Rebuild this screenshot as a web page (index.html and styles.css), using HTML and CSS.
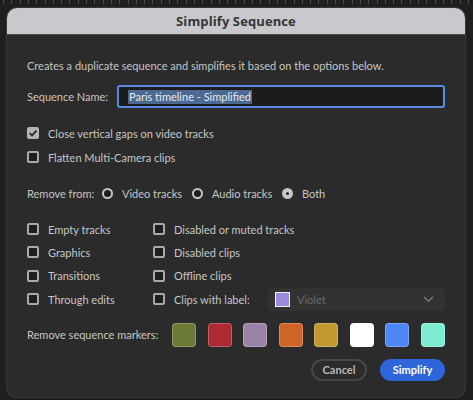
FILE: index.html
```html
<!DOCTYPE html>
<html>
<head>
<meta charset="utf-8">
<link rel="stylesheet" href="styles.css">
</head>
<body>
<div class="ruler"></div>
<div class="dialog">
  <div class="titlebar">Simplify Sequence</div>
  <div class="content">
    <div class="desc">Creates a duplicate sequence and simplifies it based on the options below.</div>
    <div class="name-row">
      <span class="label">Sequence Name:</span>
      <div class="input"><span class="sel">Paris timeline - Simplified</span></div>
    </div>
    <label class="cb cb-first"><span class="box checked"><svg viewBox="0 0 12 12" width="12" height="12"><path d="M2.6 6.2 L5 8.5 L9.4 3.6" fill="none" stroke="#2a2a2a" stroke-width="1.8"/></svg></span>Close vertical gaps on video tracks</label>
    <label class="cb cb-second"><span class="box"></span>Flatten Multi-Camera clips</label>
    <div class="radio-row">
      <span class="label">Remove from:</span>
      <span class="radio"><span class="circle"></span>Video tracks</span>
      <span class="radio"><span class="circle"></span>Audio tracks</span>
      <span class="radio"><span class="circle on"></span>Both</span>
    </div>
    <div class="grid">
      <label class="cb"><span class="box"></span>Empty tracks</label>
      <label class="cb"><span class="box"></span>Disabled or muted tracks</label>
      <span></span>
      <label class="cb"><span class="box"></span>Graphics</label>
      <label class="cb"><span class="box"></span>Disabled clips</label>
      <span></span>
      <label class="cb"><span class="box"></span>Transitions</label>
      <label class="cb"><span class="box"></span>Offline clips</label>
      <span></span>
      <label class="cb"><span class="box"></span>Through edits</label>
      <label class="cb"><span class="box"></span>Clips with label:</label>
      <div class="dropdown">
        <span class="swatch-sm"></span>
        <span class="dd-text">Violet</span>
        <svg class="chev" viewBox="0 0 12 8" width="11" height="7"><path d="M1 1.2 L6 6 L11 1.2" fill="none" stroke="#7a7a7a" stroke-width="1.6"/></svg>
      </div>
    </div>
    <div class="markers">
      <span class="label">Remove sequence markers:</span>
      <div class="swatches">
        <span class="sw olive"></span>
        <span class="sw red"></span>
        <span class="sw mauve"></span>
        <span class="sw orange"></span>
        <span class="sw gold"></span>
        <span class="sw white"></span>
        <span class="sw blue"></span>
        <span class="sw mint"></span>
      </div>
    </div>
    <div class="buttons">
      <button class="btn cancel">Cancel</button>
      <button class="btn primary">Simplify</button>
    </div>
  </div>
</div>
</body>
</html>
```
FILE: styles.css
```css
html, body {
  margin: 0;
  padding: 0;
}
body {
  background: #1f1f1f;
  width: 473px;
  height: 400px;
  overflow: hidden;
  position: relative;
  font-family: "Lato", "Liberation Sans", sans-serif;
  font-size: 11px;
  color: #c6c6c6;
  white-space: nowrap;
}
.ruler {
  position: absolute;
  left: 0;
  top: 0;
  width: 473px;
  height: 4px;
  background: repeating-linear-gradient(90deg, #1f1f1f 0 3px, #4a4a4a 3px 4px, #1f1f1f 4px 8.3px);
}
.dialog {
  margin: 8px 0 0 7px;
  width: 458px;
  height: 389px;
  background: #2b2b2b;
  border-radius: 10px;
  box-shadow: 0 0 0 1px #383838;
  overflow: hidden;
  display: flex;
  flex-direction: column;
}
.titlebar {
  height: 26px;
  background: #c9c9cd;
  border-bottom: 1px solid #4a4a4a;
  color: #363636;
  font-family: "Open Sans", "Liberation Sans", sans-serif;
  font-weight: 700;
  font-size: 13px;
  display: flex;
  align-items: center;
  justify-content: center;
  letter-spacing: 0.1px;
}
.content {
  padding: 0 20px;
  display: flex;
  flex-direction: column;
}
.desc {
  margin-top: 24px;
  height: 14px;
  line-height: 14px;
}
.name-row {
  margin-top: 12px;
  height: 23px;
  display: flex;
  align-items: center;
}
.name-row .label {
  width: 90px;
}
.input {
  flex: 1;
  height: 23px;
  box-sizing: border-box;
  border: 2px solid #5a8de2;
  border-radius: 3px;
  background: #1c1c1c;
  display: flex;
  align-items: center;
  padding-left: 9px;
}
.sel {
  background: #4d6992;
  color: #e4e8ee;
  line-height: 14px;
  padding: 0 1px;
}
.cb {
  display: flex;
  align-items: center;
  height: 16px;
  gap: 9px;
}
.cb-first { margin-top: 17px; }
.cb-second { margin-top: 8px; }
.box {
  width: 12px;
  height: 12px;
  box-sizing: border-box;
  border: 2px solid #a9a9a9;
  border-radius: 2px;
  background: #1e1e1e;
  flex: none;
  position: relative;
}
.box.checked {
  background: #b4b4b4;
  border-color: #b4b4b4;
}
.box.checked svg {
  position: absolute;
  left: -2px;
  top: -2px;
}
.radio-row {
  margin-top: 20px;
  height: 16px;
  display: flex;
  align-items: center;
}
.radio-row .label {
  width: 75px;
}
.radio {
  display: flex;
  align-items: center;
  gap: 9px;
  width: 90px;
}
.circle {
  width: 11px;
  height: 11px;
  box-sizing: border-box;
  border: 2px solid #c6c6c6;
  border-radius: 50%;
  background: #1e1e1e;
  flex: none;
}
.circle.on {
  border-width: 4px;
  background: #2b2b2b;
}
.grid {
  margin-top: 16.5px;
  display: grid;
  grid-template-columns: 126px 115px 1fr;
  grid-auto-rows: 23.33px;
  align-items: center;
}
.dropdown {
  height: 23px;
  background: #323232;
  border-radius: 4px;
  display: flex;
  align-items: center;
  padding: 0 11px 0 7px;
}
.swatch-sm {
  width: 15px;
  height: 15px;
  box-sizing: border-box;
  border: 1px solid #f2f2f2;
  background: #9b8ad9;
  margin-right: 7px;
}
.dd-text {
  color: #6a6a6a;
  flex: 1;
}
.markers {
  margin-top: 12px;
  height: 24px;
  display: flex;
  align-items: center;
}
.markers .label {
  width: 145px;
}
.swatches {
  flex: 1;
  display: flex;
  justify-content: space-between;
}
.sw {
  width: 24px;
  height: 24px;
  box-sizing: border-box;
  border-radius: 4px;
  border: 1px solid rgba(255,255,255,0.25);
}
.olive { background: #6b7a35; }
.red { background: #ae2a32; }
.mauve { background: #9d82a8; }
.orange { background: #cf6428; }
.gold { background: #bf982f; }
.white { background: #ffffff; }
.blue { background: #4f86f5; }
.mint { background: #7eecd0; }
.buttons {
  margin-top: 12px;
  display: flex;
  justify-content: flex-end;
  gap: 13px;
}
.btn {
  height: 22px;
  border-radius: 11px;
  font-family: inherit;
  font-weight: 700;
  font-size: 11px;
  padding: 0;
  box-sizing: border-box;
}
.cancel {
  width: 56px;
  background: transparent;
  border: 2px solid #474747;
  color: #b8b8b8;
}
.primary {
  width: 65px;
  background: #2e66d9;
  border: none;
  color: #ffffff;
}
```
